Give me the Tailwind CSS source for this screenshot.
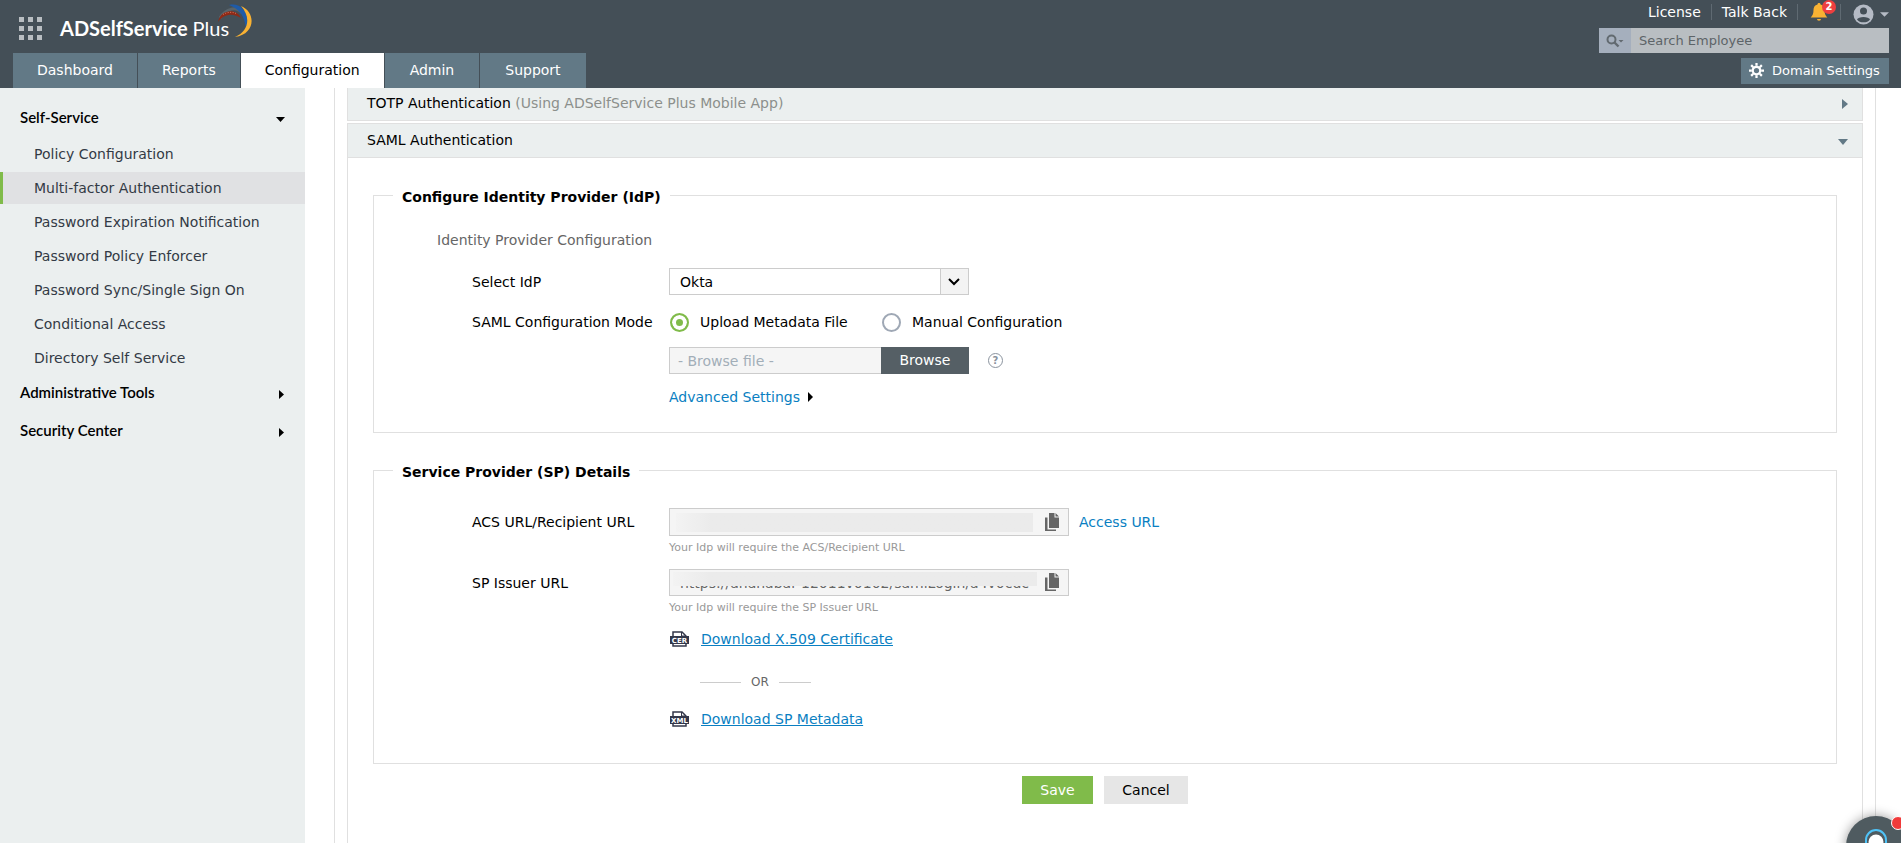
<!DOCTYPE html>
<html lang="en">
  <head>
    <meta charset="UTF-8" />
    <meta name="viewport" content="width=device-width, initial-scale=1.0" />
    <title>ADSelfService Plus</title>
    <script src="https://cdn.jsdelivr.net/npm/@tailwindcss/browser@4"></script>
  </head>
  <body class="flex h-screen flex-col overflow-hidden bg-white font-['DejaVu_Sans',Verdana,sans-serif] text-[14px] leading-5 text-black">
    <!-- Header -->
    <header class="flex h-22 shrink-0 justify-between bg-[#444f57] pr-3">
      <div class="flex flex-col justify-between pl-[13px]">
        <div class="flex h-12 items-center pt-2 pl-1.5">
          <button type="button" aria-label="Apps" class="grid grid-cols-3 gap-1">
            <span class="size-[5px] bg-[#b9bec2]"></span><span class="size-[5px] bg-[#b9bec2]"></span><span class="size-[5px] bg-[#b9bec2]"></span>
            <span class="size-[5px] bg-[#b9bec2]"></span><span class="size-[5px] bg-[#b9bec2]"></span><span class="size-[5px] bg-[#b9bec2]"></span>
            <span class="size-[5px] bg-[#b9bec2]"></span><span class="size-[5px] bg-[#b9bec2]"></span><span class="size-[5px] bg-[#b9bec2]"></span>
          </button>
          <a href="#" class="relative ml-[18px] font-[Lato,sans-serif] text-[20px] font-bold text-white">ADSelfService <span class="font-normal">Plus</span>
            <svg class="absolute -top-3.5 -right-6 h-[34px] w-9" viewBox="0 0 36 34" fill="none" aria-hidden="true">
              <path d="M3 14C9 4 20 2 25 9" stroke="#59646b" stroke-width="3" />
              <path d="M1 18C3 6 19 3 24 14C17 9 7 9 1 18Z" fill="#8f2a16" />
              <path d="M6 10.500C10 8 16 7.500 20 10" stroke="#d9775f" stroke-dasharray="1 1.500" />
              <path d="M12 1C24-2 34 9 29 25C28 13 23 5 12 1Z" fill="#1f5ba8" />
              <path d="M24 2C39 8 39 30 18 33C32 27 34 13 24 2Z" fill="#f9b233" />
            </svg>
          </a>
        </div>
        <nav class="flex h-[35px] gap-px text-white">
          <a href="#" class="flex items-center bg-[#627986] px-6 pb-0.5">Dashboard</a>
          <a href="#" class="flex items-center bg-[#627986] px-6 pb-0.5">Reports</a>
          <a href="#" class="flex items-center bg-white px-6 pb-0.5 text-black">Configuration</a>
          <a href="#" class="flex items-center bg-[#627986] px-[25px] pb-0.5">Admin</a>
          <a href="#" class="flex items-center bg-[#627986] px-[25px] pb-0.5">Support</a>
        </nav>
      </div>

      <div class="flex flex-col items-end text-white">
        <div class="flex h-7 items-center pb-1">
          <a href="#">License</a>
          <span class="mx-2.5 h-4 w-px bg-[#5f6a72]"></span>
          <a href="#">Talk Back</a>
          <span class="mx-2.5 h-4 w-px bg-[#5f6a72]"></span>
          <button type="button" aria-label="Notifications" class="relative mx-0.5 h-5 w-6">
            <svg class="h-[18px] w-[18px]" viewBox="0 0 18 18" aria-hidden="true">
              <path d="M9 0c1 0 1.500.6 1.500 1.400C13.400 2.200 14.500 4.300 14.500 7c0 4 1 5.500 2.800 7.500H.7C2.500 12.500 3.500 11 3.500 7c0-2.700 1.100-4.800 4-5.600C7.500.6 8 0 9 0Z" fill="#f9b233" />
              <path d="M7 16h4a2 1.800 0 0 1-4 0Z" fill="#f9b233" />
            </svg>
            <span class="absolute -top-0.5 left-3 flex size-3.5 items-center justify-center rounded-full bg-[#ee3f3f] text-[10px] font-bold">2</span>
          </button>
          <span class="mr-3 ml-1 h-4 w-px bg-[#5f6a72]"></span>
          <button type="button" aria-label="Account" class="flex items-center gap-1.5 pt-1">
            <svg class="size-[21px]" viewBox="0 0 21 21" aria-hidden="true">
              <circle cx="10.500" cy="10.500" r="10" fill="#b5bbc5" />
              <circle cx="10.500" cy="7" r="3.500" fill="#444f57" />
              <path d="M4 15.500C5 12 16 12 17 15.500C14.500 19.300 6.500 19.300 4 15.500Z" fill="#444f57" />
            </svg>
            <svg class="h-[5px] w-[9px]" viewBox="0 0 10 5" aria-hidden="true"><path d="M0 0h10L5 5Z" fill="#b5bbc5" /></svg>
          </button>
        </div>
        <div class="flex h-[25px] w-[290px] bg-[#b9bec2]">
          <button type="button" aria-label="Search options" class="flex w-8 items-center justify-center bg-[#a5afbd]">
            <svg class="h-3.5 w-[18px]" viewBox="0 0 18 14" fill="none" aria-hidden="true">
              <circle cx="5.500" cy="5.500" r="4" stroke="#626a70" stroke-width="2" />
              <path d="M8.500 8.500l4 4" stroke="#626a70" stroke-width="2.400" />
              <path d="M12.500 6h5L15 8.500Z" fill="#626a70" />
            </svg>
          </button>
          <input type="text" aria-label="Search Employee" placeholder="Search Employee" class="min-w-0 flex-1 px-2 text-[13px] outline-none placeholder:text-[#5d6468]" />
        </div>
        <button type="button" class="mt-[5px] flex h-[26px] w-[148px] items-center gap-2 bg-[#627986] pb-px pl-2 text-[13px]">
          <svg class="size-[15px]" viewBox="0 0 16 16" fill="none" stroke="#fff" aria-hidden="true">
            <circle cx="8" cy="8" r="4" stroke-width="2.400" />
            <path d="M8 0v3M8 13v3M0 8h3M13 8h3M2.300 2.300l2.200 2.200M11.500 11.500l2.200 2.200M2.300 13.700l2.200-2.200M11.500 4.500l2.200-2.200" stroke-width="2.400" />
          </svg>
          Domain Settings
        </button>
      </div>
    </header>

    <div class="flex min-h-0 flex-1">
      <!-- Sidebar -->
      <aside class="w-[305px] shrink-0 bg-[#ebefef]">
        <button type="button" class="flex h-[50px] w-full items-center justify-between pt-2 pr-5 pl-5 font-[Lato,sans-serif] text-[15px] font-semibold">
          Self-Service
          <svg class="mt-1 h-[5px] w-[9px]" viewBox="0 0 9 5" aria-hidden="true"><path d="M0 0h9L4.500 5Z" /></svg>
        </button>
        <ul class="space-y-0.5 text-[#333a45]">
          <li><a href="#" class="flex h-8 items-center border-l-3 border-transparent pl-[31px]">Policy Configuration</a></li>
          <li><a href="#" class="flex h-8 items-center border-l-3 border-[#80bb4a] bg-[#e0e1e3] pl-[31px]">Multi-factor Authentication</a></li>
          <li><a href="#" class="flex h-8 items-center border-l-3 border-transparent pl-[31px]">Password Expiration Notification</a></li>
          <li><a href="#" class="flex h-8 items-center border-l-3 border-transparent pl-[31px]">Password Policy Enforcer</a></li>
          <li><a href="#" class="flex h-8 items-center border-l-3 border-transparent pl-[31px]">Password Sync/Single Sign On</a></li>
          <li><a href="#" class="flex h-8 items-center border-l-3 border-transparent pl-[31px]">Conditional Access</a></li>
          <li><a href="#" class="flex h-8 items-center border-l-3 border-transparent pl-[31px]">Directory Self Service</a></li>
        </ul>
        <button type="button" class="flex h-[38px] w-full items-center justify-between pr-[21px] pb-0.5 pl-5 font-[Lato,sans-serif] text-[15px] font-semibold">
          Administrative Tools
          <svg class="mt-1 h-[9px] w-[5px]" viewBox="0 0 5 9" aria-hidden="true"><path d="M0 0v9L5 4.500Z" /></svg>
        </button>
        <button type="button" class="flex h-[38px] w-full items-center justify-between pr-[21px] pb-0.5 pl-5 font-[Lato,sans-serif] text-[15px] font-semibold">
          Security Center
          <svg class="mt-1 h-[9px] w-[5px]" viewBox="0 0 5 9" aria-hidden="true"><path d="M0 0v9L5 4.500Z" /></svg>
        </button>
      </aside>

      <!-- Content -->
      <main class="flex min-w-0 flex-1 pr-[25px] pl-[29px]">
        <div class="flex flex-1 flex-col border-x border-[#e0e0e0] px-3">
          <button type="button" class="flex h-[33px] shrink-0 items-center justify-between border-x border-b border-[#e0e0e0] bg-[#ebefef] pr-3.5 pb-0.5 pl-[19px]">
            <span>TOTP Authentication <span class="text-[#8c8f8c]">(Using ADSelfService Plus Mobile App)</span></span>
            <svg class="mt-0.5 h-[10px] w-[6px]" viewBox="0 0 6 10" aria-hidden="true"><path d="M0 0v10L6 5Z" fill="#627986" /></svg>
          </button>
          <button type="button" class="mt-0.5 flex h-[35px] shrink-0 items-center justify-between border border-[#e0e0e0] bg-[#ebefef] pr-3.5 pb-0.5 pl-[19px]">
            SAML Authentication
            <svg class="mt-1 h-[6px] w-[10px]" viewBox="0 0 10 6" aria-hidden="true"><path d="M0 0h10L5 6Z" fill="#627986" /></svg>
          </button>

          <form class="flex-1 border-x border-[#e0e0e0] px-[25px] pt-[25px]">
            <fieldset class="h-[250px] border border-[#e0e0e0] pl-[19px]">
              <legend class="px-[9px] pt-1 text-[14px] font-bold">Configure Identity Provider (IdP)</legend>
              <p class="mt-[23px] pl-11 text-[#666]">Identity Provider Configuration</p>
              <div class="mt-[18px] flex items-center pl-[79px]">
                <label for="idp" class="w-[197px]">Select IdP</label>
                <div class="relative">
                  <select id="idp" class="block h-[27px] w-[300px] appearance-none border border-[#ccc] bg-white pl-2.5 outline-none">
                    <option>Okta</option>
                  </select>
                  <span class="pointer-events-none absolute top-px right-px flex h-[25px] w-7 items-center justify-center border-l border-[#ccc] bg-[#f3f3f3] pr-0.5">
                    <svg class="h-2 w-3" viewBox="0 0 12 8" fill="none" aria-hidden="true"><path d="M1 1l5 5 5-5" stroke="#000" stroke-width="2" /></svg>
                  </span>
                </div>
              </div>
              <div class="mt-[17px] flex h-5 items-center pl-[79px]">
                <span class="w-[198px]">SAML Configuration Mode</span>
                <input id="upload" name="mode" type="radio" checked class="size-[19px] appearance-none rounded-full border-2 border-[#9fa8b5] checked:border-[#80bb4a] checked:bg-[#80bb4a] checked:inset-ring-4 checked:inset-ring-white" />
                <label for="upload" class="ml-[11px] w-[182px]">Upload Metadata File</label>
                <input id="manual" name="mode" type="radio" class="size-[19px] appearance-none rounded-full border-2 border-[#9fa8b5]" />
                <label for="manual" class="ml-[11px]">Manual Configuration</label>
              </div>
              <div class="mt-[15px] flex items-center pl-69">
                <input type="text" aria-label="Metadata file" placeholder="- Browse file -" readonly class="h-[27px] w-[212px] border border-r-0 border-[#ccc] bg-[#f5f5f5] pl-2 outline-none placeholder:text-[#a2aeb8]" />
                <button type="button" class="h-[27px] w-22 bg-[#555f65] pb-0.5 text-white">Browse</button>
                <button type="button" aria-label="Help" class="ml-[19px] flex size-[15px] items-center justify-center rounded-full border border-[#8a939e] text-[10px] font-bold text-[#8a939e]">?</button>
              </div>
              <a href="#" class="mt-[13px] ml-69 flex items-center gap-2 text-[#0a7fc2]">Advanced Settings
                <svg class="h-[10px] w-[5px]" viewBox="0 0 5 10" aria-hidden="true"><path d="M0 0v10L5 5Z" fill="#000" /></svg>
              </a>
            </fieldset>

            <fieldset class="mt-[25px] h-[306px] border border-[#e0e0e0] pl-[19px]">
              <legend class="px-[9px] pt-1 text-[14px] font-bold">Service Provider (SP) Details</legend>
              <div class="mt-[26px] flex items-center pl-[79px]">
                <label for="acs" class="w-[197px]">ACS URL/Recipient URL</label>
                <div class="relative">
                  <input id="acs" type="text" readonly class="block h-7 w-[400px] border border-[#ccc] bg-[#f5f5f5] pr-9 pl-2.5 outline-none" />
                  <span class="absolute top-[5px] right-9 left-[7px] h-[19px] bg-linear-to-r from-[#f3f3f3] to-[#ebebeb] to-10%"></span>
                  <button type="button" aria-label="Copy ACS URL" class="absolute top-[5px] right-2.5">
                    <svg class="h-[18px] w-3.5" viewBox="0 0 14 18" fill="#666" aria-hidden="true"><path d="M4 0h5.500v4.500H14V15H4Z M10.500 0L14 3.500h-3.500Z M0 4.500h2.500v12H11V18H0Z" /></svg>
                  </button>
                </div>
                <a href="#" class="ml-2.5 text-[#0a7fc2]">Access URL</a>
              </div>
              <p class="mt-0.5 pl-69 text-[11px] text-[#999]">Your Idp will require the ACS/Recipient URL</p>
              <div class="mt-[11px] flex items-center pl-[79px]">
                <label for="issuer" class="w-[197px]">SP Issuer URL</label>
                <div class="relative">
                  <input id="issuer" type="text" readonly value="https://ananabar-12011v0102/samlLogin/a4v0cdc" class="block h-[27px] w-[400px] border border-[#ccc] bg-[#f5f5f5] pr-9 pl-2.5 text-[#666] outline-none" />
                  <span class="absolute top-[3px] right-8 left-1 h-3.5 bg-linear-to-r from-[#f3f3f3] to-[#ebebeb] to-10%"></span>
                  <button type="button" aria-label="Copy SP Issuer URL" class="absolute top-1 right-2.5">
                    <svg class="h-[18px] w-3.5" viewBox="0 0 14 18" fill="#666" aria-hidden="true"><path d="M4 0h5.500v4.500H14V15H4Z M10.500 0L14 3.500h-3.500Z M0 4.500h2.500v12H11V18H0Z" /></svg>
                  </button>
                </div>
              </div>
              <p class="mt-0.5 pl-69 text-[11px] text-[#999]">Your Idp will require the SP Issuer URL</p>
              <div class="mt-[11px] flex items-center gap-3 pl-[277px]">
                <svg class="h-4 w-[19px]" viewBox="0 0 19 16" aria-hidden="true">
                  <path d="M3 5V1h9l4 4v10H3Z" fill="none" stroke="#33374a" stroke-width="1.500" />
                  <path d="M11.500 1v4H16" fill="none" stroke="#33374a" />
                  <rect y="5" width="19" height="8" fill="#33374a" />
                  <text x="9.500" y="11.800" text-anchor="middle" font-size="7" font-weight="bold" fill="#fff">CER</text>
                </svg>
                <a href="#" class="text-[#0a7fc2] underline">Download X.509 Certificate</a>
              </div>
              <div class="mt-[23px] flex items-center pl-[307px] text-[12px] text-[#666]">
                <span class="h-px w-[41px] bg-[#ccc]"></span>
                <span class="px-2.5">OR</span>
                <span class="h-px w-8 bg-[#ccc]"></span>
              </div>
              <div class="mt-[17px] flex items-center gap-3 pl-[277px]">
                <svg class="h-4 w-[19px]" viewBox="0 0 19 16" aria-hidden="true">
                  <path d="M3 5V1h9l4 4v10H3Z" fill="none" stroke="#33374a" stroke-width="1.500" />
                  <path d="M11.500 1v4H16" fill="none" stroke="#33374a" />
                  <rect y="5" width="19" height="8" fill="#33374a" />
                  <text x="9.500" y="11.800" text-anchor="middle" font-size="7" font-weight="bold" fill="#fff">XML</text>
                </svg>
                <a href="#" class="text-[#0a7fc2] underline">Download SP Metadata</a>
              </div>
            </fieldset>

            <div class="mt-3 flex justify-center gap-[11px]">
              <button type="submit" class="h-7 w-[71px] bg-[#80bb4a] text-white">Save</button>
              <button type="button" class="h-7 w-21 bg-[#e6e6e6]">Cancel</button>
            </div>
          </form>
        </div>
      </main>
    </div>

    <!-- Support chat -->
    <button type="button" aria-label="Support" class="fixed -right-[5px] -bottom-[33px] size-15 rounded-full bg-[#4f5b60] shadow-[0_0_12px_rgba(0,0,0,0.4)]">
      <svg class="size-15" viewBox="0 0 60 60" fill="none" aria-hidden="true">
        <circle cx="30" cy="26" r="7.500" fill="#fff" />
        <path d="M20 30v-6a10 10 0 0 1 20 0v6" stroke="#4fc3f7" stroke-width="2" />
      </svg>
      <span class="absolute top-0 right-px size-3.5 rounded-full border border-white bg-[#f03a3a]"></span>
    </button>
  </body>
</html>
